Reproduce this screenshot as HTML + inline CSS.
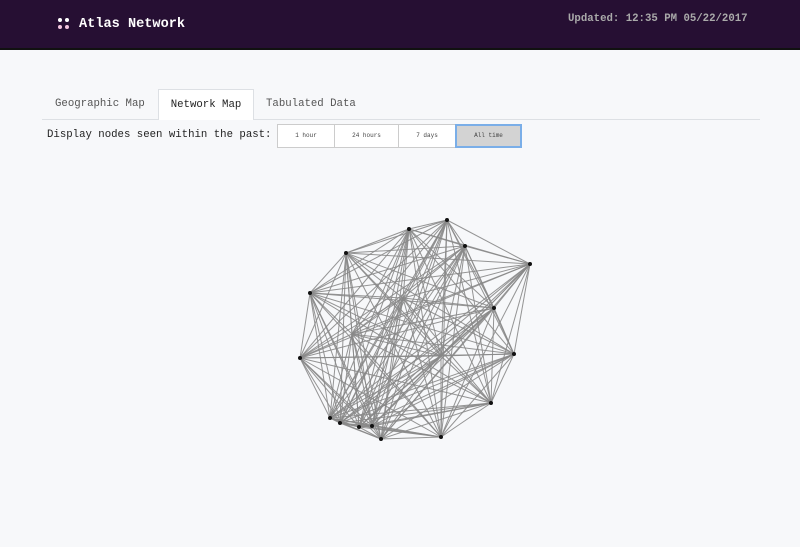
<!DOCTYPE html>
<html><head><meta charset="utf-8"><style>
body{margin:0;width:800px;height:547px;background:#f7f8fa;font-family:"Liberation Mono",monospace;overflow:hidden;position:relative}
.hdr{position:absolute;left:0;top:0;width:800px;height:48px;background:#260f33;border-bottom:2px solid #111}
.logo i{position:absolute;width:4px;height:4px;border-radius:50%;background:#fff}
.title{position:absolute;left:79px;top:16px;color:#fff;font-weight:bold;font-size:13.6px;line-height:18px}
.upd{position:absolute;left:568px;top:12px;color:#aaa;font-weight:bold;font-size:10.7px;line-height:14px}
.tabline{position:absolute;left:42px;top:119px;width:718px;height:1px;background:#dde0e4}
.tab{position:absolute;top:89px;height:30px;line-height:30px;font-size:10.7px;color:#555}
.tab.act{background:#fff;border:1px solid #dde0e4;border-bottom:none;color:#222}
.lbl{position:absolute;left:47px;top:128px;font-size:10.7px;line-height:14px;color:#222}
.btn{position:absolute;top:124px;height:22px;line-height:22px;background:#fff;border:1px solid #ccc;font-size:6px;text-align:center;color:#444}
.btn.sel{background:#d3d3d3;border:2px solid #7aaee8;line-height:20px;height:20px}
</style></head><body>
<div class="hdr">
<div class="logo"><i style="left:58px;top:18px"></i><i style="left:65px;top:18px"></i><i style="left:58px;top:25px;background:#f4c6e0"></i><i style="left:65px;top:25px;background:#f4c6e0"></i></div>
<div class="title">Atlas Network</div>
<div class="upd">Updated: 12:35 PM 05/22/2017</div>
</div>
<div class="tabline"></div>
<div class="tab" style="left:55px">Geographic Map</div>
<div class="tab act" style="left:158px;width:94px;text-align:center">Network Map</div>
<div class="tab" style="left:266px">Tabulated Data</div>
<div class="lbl">Display nodes seen within the past:</div>
<div class="btn" style="left:277px;width:56px">1 hour</div>
<div class="btn" style="left:334px;width:63px">24 hours</div>
<div class="btn" style="left:398px;width:56px">7 days</div>
<div class="btn sel" style="left:455px;width:63px">All time</div>
<svg id="g" width="800" height="547" style="position:absolute;left:0;top:0"></svg>
<script>
var n=[[447,220],[409,229],[465,246],[346,253],[530,264],[310,293],[494,308],[403,298],[352,334],[441,356],[300,358],[514,354],[491,403],[330,418],[340,423],[359,427],[372,426],[381,439],[441,437]];
var s='';
for(var i=0;i<n.length;i++)for(var j=i+1;j<n.length;j++)s+='<line x1="'+n[i][0]+'" y1="'+n[i][1]+'" x2="'+n[j][0]+'" y2="'+n[j][1]+'" stroke="#888" stroke-width="1" stroke-opacity="0.9"/>';
for(var i=0;i<n.length;i++)if(i!=7&&i!=8&&i!=9)s+='<circle cx="'+n[i][0]+'" cy="'+n[i][1]+'" r="2" fill="#111"/>';
document.getElementById('g').innerHTML=s;
</script>
</body></html>
